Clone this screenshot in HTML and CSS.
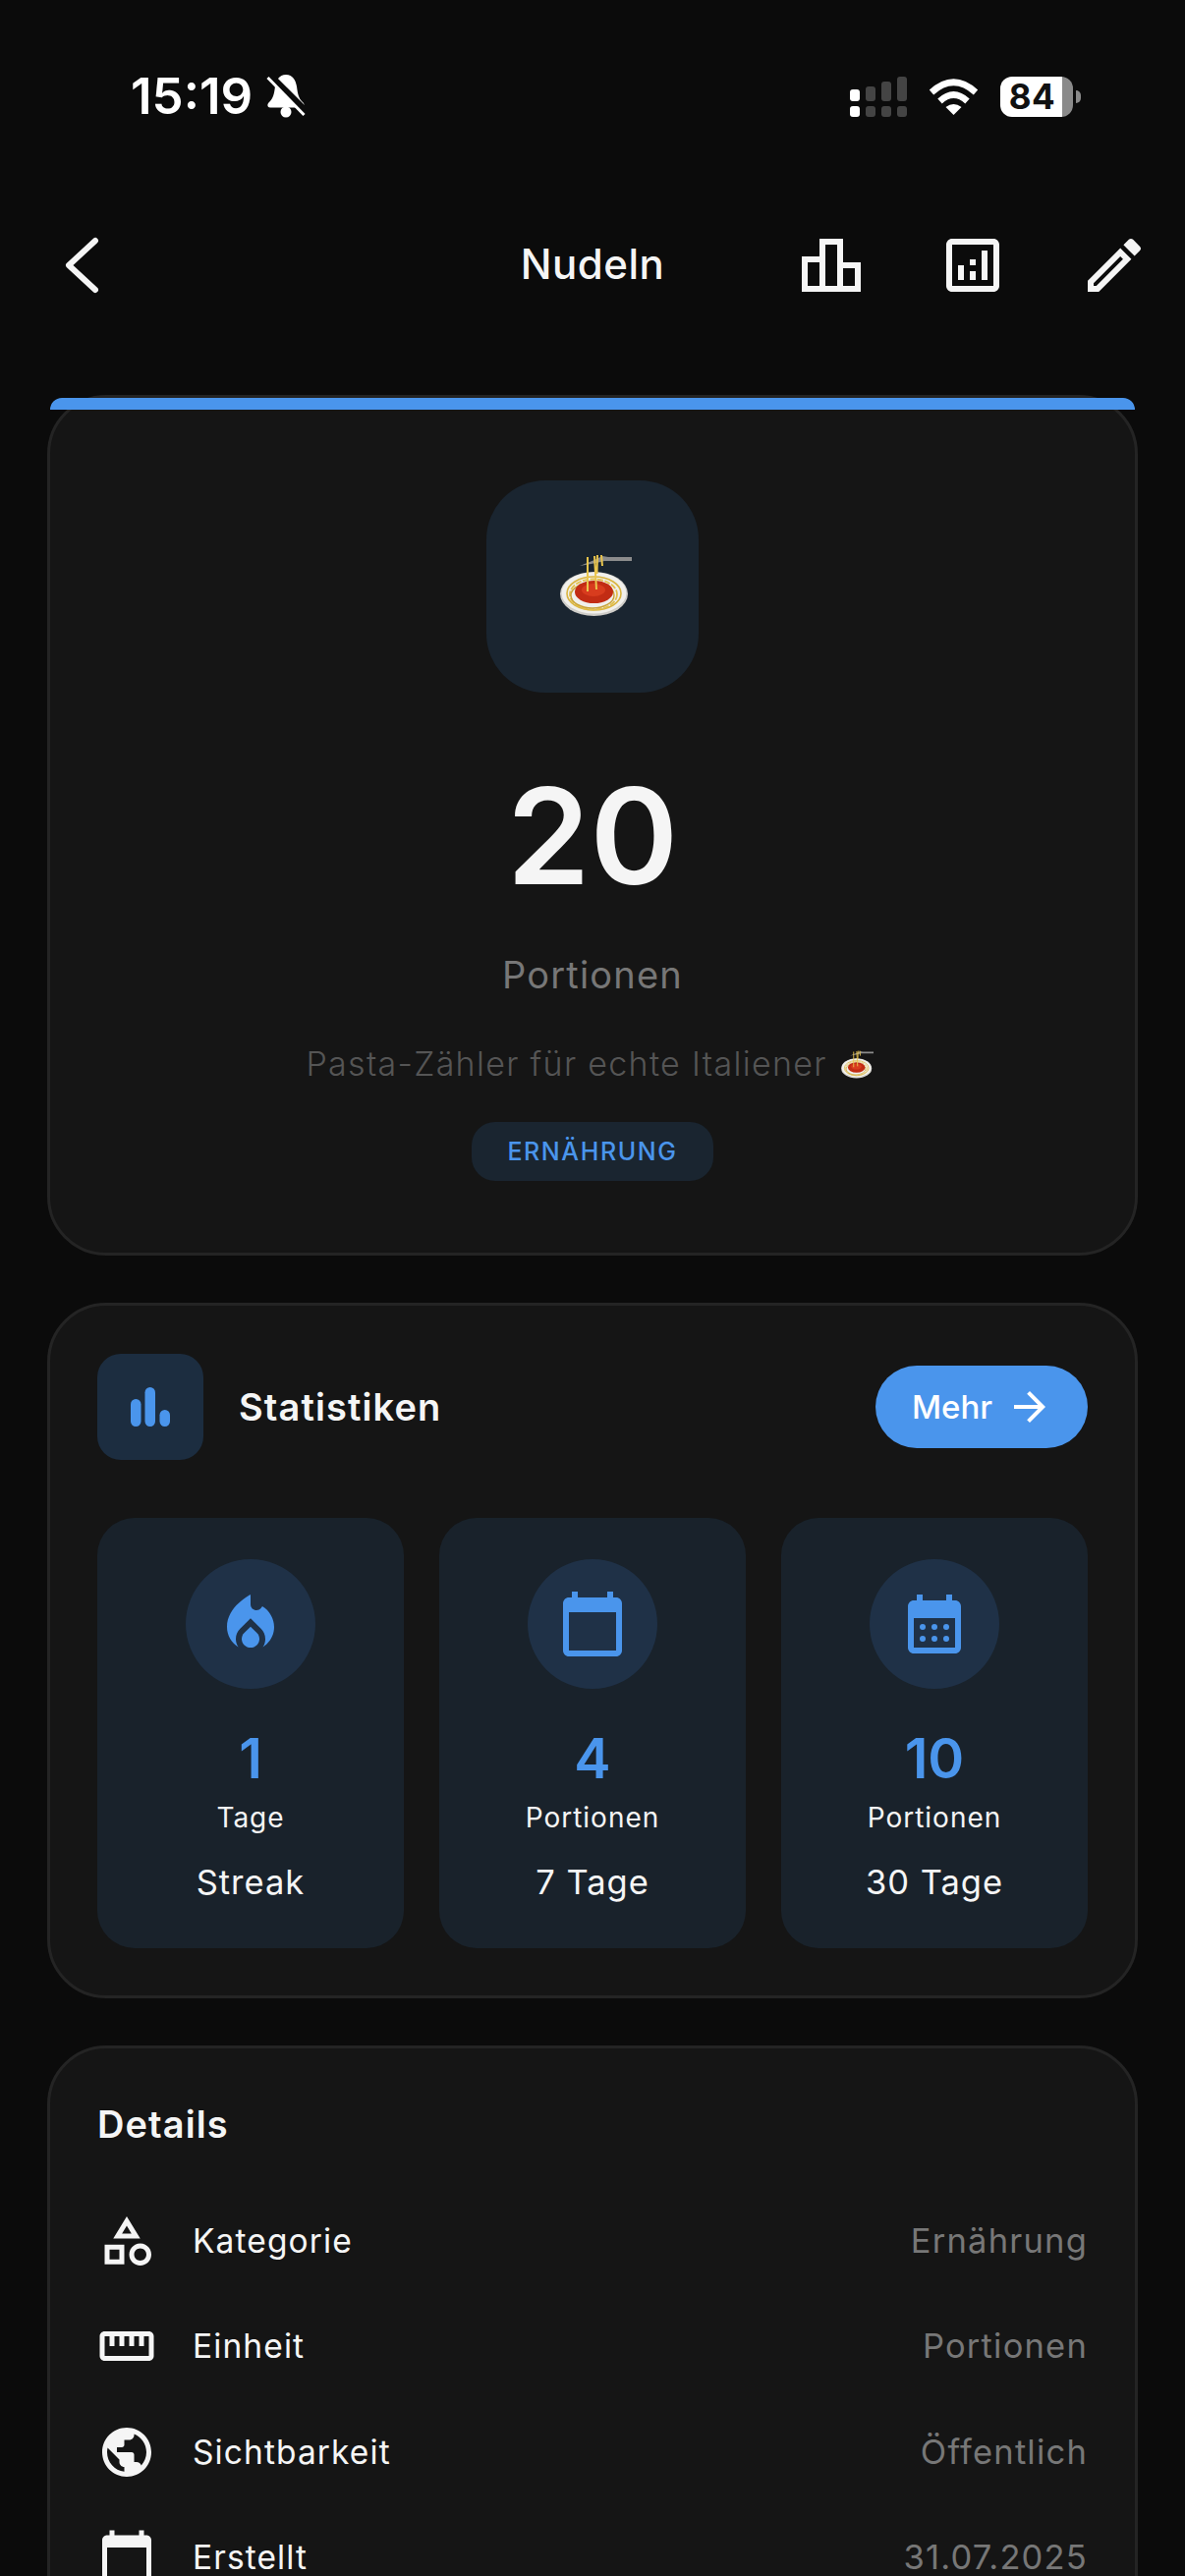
FILE: index.html
```html
<!DOCTYPE html>
<html lang="de">

<head>
    <meta charset="UTF-8">
    <meta name="viewport" content="width=device-width, initial-scale=1.0">
    <title>Nudeln</title>
    <link rel="stylesheet" href="styles.css">
</head>

<body>

    <!-- Spaghetti-Emoji, wird zweimal benutzt -->
    <svg class="sprite" hidden>
        <symbol id="pasta" viewBox="0 0 80 70">
            <path d="M80 5L56 5L50 4L42 8L27 14L44 11L52 9L80 9Z" fill="#8c8c8c" />
            <ellipse cx="41.500" cy="42.500" rx="34.500" ry="22.500" fill="#cfcdc8" />
            <ellipse cx="41.500" cy="41.500" rx="33" ry="21" fill="#f1f0ec" />
            <ellipse cx="41.500" cy="42" rx="27.500" ry="17" fill="none" stroke="#d9b440" stroke-width="1.600" />
            <ellipse cx="41" cy="43" rx="24" ry="15.500" fill="none" stroke="#e2c04e" stroke-width="1.800" stroke-dasharray="6 1.500" />
            <ellipse cx="40" cy="44" rx="22" ry="13" fill="none" stroke="#c9a238" stroke-width="1.400" />
            <ellipse cx="41.500" cy="40.500" rx="19.500" ry="11.500" fill="#c22c14" />
            <ellipse cx="41" cy="38.500" rx="12" ry="6.500" fill="#d83c1e" />
            <path d="M35 5L35 40M42 4L44 38M45 3L44.500 22M49 3L50 14" fill="none" stroke="#e9c54c" stroke-width="2" />
        </symbol>
    </svg>

    <!-- Statusleiste -->
    <div class="status-bar">
        <div class="status-left">
            <span class="time">15:19</span>
            <svg class="bell" viewBox="0 0 40 44">
                <path d="M20 0C27 0 30 6 31 12C32 20 33 24 37 28C39.500 30 39 33.500 36 33.500L4 33.500C1 33.500 .5 30 3 28C7 24 8 20 9 12C10 6 13 0 20 0Z" fill="#fff" />
                <circle cx="20" cy="38" r="5.500" fill="#fff" />
                <path d="M4 1L41 38" stroke="#0b0b0b" stroke-width="7" />
                <path d="M1.500 3L38.500 41" stroke="#fff" stroke-width="3" />
            </svg>
        </div>
        <div class="status-right">
            <svg class="signal" viewBox="0 0 58 41">
                <rect x="0" y="13" width="10" height="12" rx="3" fill="#fff" />
                <rect x="16" y="10" width="10" height="15" rx="3" fill="#444" />
                <rect x="32" y="5" width="10" height="20" rx="3" fill="#444" />
                <rect x="48" y="0" width="10" height="25" rx="3" fill="#444" />
                <rect x="0" y="30" width="10" height="11" rx="3" fill="#fff" />
                <rect x="16" y="30" width="10" height="11" rx="3" fill="#444" />
                <rect x="32" y="30" width="10" height="11" rx="3" fill="#444" />
                <rect x="48" y="30" width="10" height="11" rx="3" fill="#444" />
            </svg>
            <svg class="wifi" viewBox="0 0 51 37">
                <path d="M3 14Q25.500 -6.500 48 14" fill="none" stroke="#fff" stroke-width="6.500" />
                <path d="M11.500 23Q25.500 10 39.500 23" fill="none" stroke="#fff" stroke-width="6.500" />
                <path d="M25.500 37L17.500 29Q25.500 23 33.500 29Z" fill="#fff" />
            </svg>
            <div class="battery">84</div>
        </div>
    </div>

    <!-- Kopfzeile -->
    <header class="nav">
        <svg class="icon-big" viewBox="0 0 72 72">
            <polyline points="61,11 34,36 61,61" fill="none" stroke="#f5f5f5" stroke-width="6" stroke-linecap="round" stroke-linejoin="round" />
        </svg>
        <div class="nav-title">Nudeln</div>
        <div class="nav-actions">
            <svg class="icon-big" viewBox="0 0 24 24">
                <path d="M16 11V3H8v6H2v12h20V11h-6zm-6-6h4v14h-4V5zm-6 6h4v8H4v-8zm16 8h-4v-6h4v6z" />
            </svg>
            <svg class="icon-big" viewBox="0 0 24 24">
                <path d="M19 3H5c-1.100 0-2 .9-2 2v14c0 1.100.9 2 2 2h14c1.100 0 2-.9 2-2V5c0-1.100-.9-2-2-2zm0 16H5V5h14v14z" />
                <path d="M7 12h2v5H7zm8-5h2v10h-2zm-4 7h2v3h-2zm0-4h2v2h-2z" />
            </svg>
            <svg class="icon-big" viewBox="0 0 24 24">
                <path d="M3 17.250V21h3.750L17.810 9.940l-3.750-3.750L3 17.250zM5.920 19H5v-.92l9.060-9.060.92.92L5.920 19zM20.710 5.630l-2.340-2.340c-.2-.2-.45-.29-.71-.29s-.51.1-.7.29l-1.830 1.830 3.750 3.750 1.830-1.830c.39-.39.39-1.020 0-1.410z" />
            </svg>
        </div>
    </header>

    <main class="content">

        <!-- Zähler -->
        <section class="card counter-card">
            <div class="counter-strip"></div>
            <div class="counter-emoji">
                <svg class="pasta-big"><use href="#pasta" /></svg>
            </div>
            <div class="counter-value">20</div>
            <div class="counter-unit">Portionen</div>
            <div class="counter-desc">Pasta-Zähler für echte Italiener <svg class="pasta-small"><use href="#pasta" /></svg></div>
            <div class="counter-tag">ERNÄHRUNG</div>
        </section>

        <!-- Statistiken -->
        <section class="card stats-card">
            <div class="stats-head">
                <div class="stats-icon">
                    <svg class="icon-40" viewBox="0 0 40 40">
                        <rect x="0" y="12" width="10.500" height="28" rx="5.200" />
                        <rect x="14.500" y="0" width="10.500" height="40" rx="5.200" />
                        <rect x="29.500" y="23" width="10.500" height="17" rx="5.200" />
                    </svg>
                </div>
                <h2 class="card-title">Statistiken</h2>
                <button class="more-button">
                    <span>Mehr</span>
                    <svg class="icon-48" viewBox="0 0 24 24">
                        <path d="M12 4l-1.410 1.410L16.170 11H4v2h12.170l-5.580 5.590L12 20l8-8z" />
                    </svg>
                </button>
            </div>

            <div class="stats-grid">
                <div class="stat-tile">
                    <div class="stat-circle">
                        <svg class="icon-big" viewBox="0 0 24 24">
                            <path d="M12 12.900l-2.130 2.090C9.310 15.550 9 16.280 9 17.060 9 18.680 10.350 20 12 20s3-1.320 3-2.940c0-.78-.31-1.520-.87-2.070L12 12.900z" />
                            <path d="M16 6l-.44.55C14.380 8.020 12 7.190 12 5.300V2S4 6 4 13c0 2.920 1.560 5.470 3.890 6.860-.56-.79-.89-1.760-.89-2.800 0-1.320.52-2.560 1.470-3.500L12 10.100l3.530 3.470c.95.93 1.470 2.170 1.470 3.500 0 1.020-.31 1.960-.85 2.750 1.890-1.150 3.290-3.060 3.710-5.300.66-3.460-1.080-6.860-3.860-8.520z" />
                        </svg>
                    </div>
                    <div class="stat-number">1</div>
                    <div class="stat-unit">Tage</div>
                    <div class="stat-label">Streak</div>
                </div>
                <div class="stat-tile">
                    <div class="stat-circle">
                        <svg class="icon-big" viewBox="0 0 24 24">
                            <path d="M20 3h-1V1h-2v2H7V1H5v2H4c-1.100 0-2 .9-2 2v16c0 1.100.9 2 2 2h16c1.100 0 2-.9 2-2V5c0-1.100-.9-2-2-2zm0 18H4V8h16v13z" />
                        </svg>
                    </div>
                    <div class="stat-number">4</div>
                    <div class="stat-unit">Portionen</div>
                    <div class="stat-label">7 Tage</div>
                </div>
                <div class="stat-tile">
                    <div class="stat-circle">
                        <svg class="icon-big" viewBox="0 0 24 24">
                            <path d="M19 4h-1V2h-2v2H8V2H6v2H5c-1.110 0-1.990.9-1.990 2L3 20c0 1.100.89 2 2 2h14c1.100 0 2-.9 2-2V6c0-1.100-.9-2-2-2zm0 16H5V10h14v10z" />
                            <circle cx="8" cy="13" r="1" />
                            <circle cx="12" cy="13" r="1" />
                            <circle cx="16" cy="13" r="1" />
                            <circle cx="8" cy="17" r="1" />
                            <circle cx="12" cy="17" r="1" />
                            <circle cx="16" cy="17" r="1" />
                        </svg>
                    </div>
                    <div class="stat-number">10</div>
                    <div class="stat-unit">Portionen</div>
                    <div class="stat-label">30 Tage</div>
                </div>
            </div>
        </section>

        <!-- Details -->
        <section class="card details-card">
            <h2 class="card-title">Details</h2>
            <div class="details-list">
                <div class="detail-row">
                    <svg class="icon-60" viewBox="0 0 24 24">
                        <path d="M12 2l-5.500 9h11L12 2zm0 3.840L13.930 9h-3.870L12 5.840zM17.500 13c-2.490 0-4.500 2.010-4.500 4.500s2.010 4.500 4.500 4.500 4.500-2.010 4.500-4.500-2.010-4.500-4.500-4.500zm0 7c-1.380 0-2.500-1.120-2.500-2.500s1.120-2.500 2.500-2.500 2.500 1.120 2.500 2.500-1.120 2.500-2.500 2.500zM3 21.500h8v-8H3v8zm2-6h4v4H5v-4z" />
                    </svg>
                    <span class="detail-name">Kategorie</span>
                    <span class="detail-value">Ernährung</span>
                </div>
                <div class="detail-row">
                    <svg class="icon-60" viewBox="0 0 24 24">
                        <path d="M21 6H3c-1.100 0-2 .9-2 2v8c0 1.100.9 2 2 2h18c1.100 0 2-.9 2-2V8c0-1.100-.9-2-2-2zm0 10H3V8h2v4h2V8h2v4h2V8h2v4h2V8h2v4h2V8h2v8z" />
                    </svg>
                    <span class="detail-name">Einheit</span>
                    <span class="detail-value">Portionen</span>
                </div>
                <div class="detail-row">
                    <svg class="icon-60" viewBox="0 0 24 24">
                        <path d="M12 2C6.480 2 2 6.480 2 12s4.480 10 10 10 10-4.480 10-10S17.520 2 12 2zm-1 17.930c-3.950-.49-7-3.850-7-7.930 0-.62.08-1.210.21-1.790L9 15v1c0 1.100.9 2 2 2v1.930zm6.900-2.540c-.26-.81-1-1.390-1.900-1.390h-1v-3c0-.55-.45-1-1-1H8v-2h2c.55 0 1-.45 1-1V7h2c1.100 0 2-.9 2-2v-.41c2.930 1.190 5 4.060 5 7.410 0 2.080-.8 3.970-2.100 5.390z" />
                    </svg>
                    <span class="detail-name">Sichtbarkeit</span>
                    <span class="detail-value">Öffentlich</span>
                </div>
                <div class="detail-row">
                    <svg class="icon-60" viewBox="0 0 24 24">
                        <path d="M20 3h-1V1h-2v2H7V1H5v2H4c-1.100 0-2 .9-2 2v16c0 1.100.9 2 2 2h16c1.100 0 2-.9 2-2V5c0-1.100-.9-2-2-2zm0 18H4V8h16v13z" />
                    </svg>
                    <span class="detail-name">Erstellt</span>
                    <span class="detail-value">31.07.2025</span>
                </div>
            </div>
        </section>

    </main>

</body>

</html>
```

FILE: styles.css
```css
* {
    box-sizing: border-box;
}

body {
    width: 1206px;
    height: 2622px;
    margin: 0;
    overflow: hidden;
    font-family: Inter, "Liberation Sans", sans-serif;
    color: #f5f5f5;
    background-color: #0b0b0b;
}

svg {
    display: block;
    flex-shrink: 0;
    fill: currentColor;
}

.sprite {
    display: none;
}

/* Statusleiste */
.status-bar {
    display: flex;
    justify-content: space-between;
    align-items: center;
    height: 196px;
    padding: 0 114px 0 133px;
}

.status-left {
    display: flex;
    align-items: center;
    gap: 14px;
}

.time {
    font-size: 51px;
    font-weight: 600;
    line-height: 60px;
    color: #fff;
}

.bell {
    width: 40px;
    height: 44px;
}

.status-right {
    display: flex;
    align-items: center;
}

.signal {
    width: 58px;
    height: 41px;
}

.wifi {
    width: 51px;
    height: 37px;
    margin: 0 22px;
}

.battery {
    position: relative;
    width: 74px;
    height: 41px;
    padding-right: 9px;
    border-radius: 12px;
    font-size: 35px;
    font-weight: 700;
    line-height: 41px;
    letter-spacing: 0.5px;
    text-align: center;
    color: #111;
    background: linear-gradient(to right, #fff 85%, #8a8a8a 85%);
}

/* kleine Nase am Akku */
.battery::after {
    content: "";
    position: absolute;
    top: 14px;
    right: -8px;
    width: 5px;
    height: 13px;
    border-radius: 0 6px 6px 0;
    background-color: #8a8a8a;
}

/* Kopfzeile */
.nav {
    display: grid;
    grid-template-columns: 1fr auto 1fr;
    align-items: center;
    height: 148px;
    padding: 0 36px;
}

.nav-title {
    margin-top: -3px;
    font-size: 42px;
    font-weight: 500;
    letter-spacing: 0.5px;
    text-align: center;
}

.nav-actions {
    display: flex;
    justify-content: flex-end;
    gap: 72px;
}

.icon-big {
    width: 72px;
    height: 72px;
}

.icon-60 {
    width: 60px;
    height: 60px;
}

.icon-48 {
    width: 48px;
    height: 48px;
}

.icon-40 {
    width: 40px;
    height: 40px;
}

/* Karten */
.content {
    display: flex;
    flex-direction: column;
    gap: 48px;
    padding: 58px 48px 0;
}

.card {
    position: relative;
    flex-shrink: 0;
    padding: 47px 48px;
    border: 3px solid #242424;
    border-radius: 60px;
    background-color: #151515;
}

.card-title {
    margin: 0;
    font-size: 38px;
    font-weight: 600;
    line-height: 58px;
    letter-spacing: 1.1px;
}

/* Zähler */
.counter-card {
    display: flex;
    flex-direction: column;
    align-items: center;
    height: 876px;
    padding-top: 84px;
}

.counter-strip {
    position: absolute;
    top: 0;
    left: 0;
    right: 0;
    height: 12px;
    border-radius: 12px 12px 0 0;
    background-color: #4a95ec;
}

.counter-emoji {
    display: flex;
    justify-content: center;
    align-items: center;
    width: 216px;
    height: 216px;
    border-radius: 60px;
    background-color: #1a2530;
}

.pasta-big {
    width: 80px;
    height: 70px;
}

.pasta-small {
    display: inline-block;
    width: 36px;
    height: 32px;
    vertical-align: -5px;
}

.counter-value {
    margin-top: 51px;
    font-size: 136px;
    font-weight: 600;
    line-height: 190px;
}

.counter-unit {
    margin-top: 24px;
    font-size: 38px;
    line-height: 44px;
    letter-spacing: 1.2px;
    color: #777;
}

.counter-desc {
    margin-top: 47px;
    padding-right: 6px;
    font-size: 34px;
    font-weight: 300;
    line-height: 44px;
    letter-spacing: 1.3px;
    color: #555;
}

.counter-tag {
    margin-top: 37px;
    width: 246px;
    height: 60px;
    border-radius: 24px;
    font-size: 25px;
    font-weight: 500;
    line-height: 60px;
    letter-spacing: 1.6px;
    text-align: center;
    color: #4a95ec;
    background-color: #1a2530;
}

/* Statistiken */
.stats-card {
    padding-top: 49px;
    padding-bottom: 48px;
}

.stats-head {
    display: flex;
    align-items: center;
    gap: 36px;
    margin-bottom: 59px;
}

.stats-icon {
    display: flex;
    justify-content: center;
    align-items: center;
    width: 108px;
    height: 108px;
    border-radius: 24px;
    color: #4a95ec;
    background-color: #1c2d40;
}

.more-button {
    display: flex;
    align-items: center;
    gap: 14px;
    height: 84px;
    margin-left: auto;
    padding: 0 35px 0 37px;
    border: none;
    border-radius: 42px;
    font-family: inherit;
    font-size: 33px;
    font-weight: 500;
    color: #fff;
    background-color: #4a95ec;
}

.stats-grid {
    display: grid;
    grid-template-columns: repeat(3, 1fr);
    gap: 36px;
}

.stat-tile {
    display: flex;
    flex-direction: column;
    align-items: center;
    height: 438px;
    padding-top: 42px;
    border-radius: 38px;
    background-color: #19222b;
}

.stat-circle {
    display: flex;
    justify-content: center;
    align-items: center;
    width: 132px;
    height: 132px;
    border-radius: 50%;
    color: #4a95ec;
    background-color: #1f3147;
}

.stat-number {
    margin-top: 41px;
    font-size: 56px;
    font-weight: 600;
    line-height: 60px;
    color: #4a95ec;
}

.stat-unit {
    margin-top: 12px;
    font-size: 28px;
    line-height: 36px;
    letter-spacing: 1px;
}

.stat-label {
    margin-top: 25px;
    font-size: 34.500px;
    line-height: 46px;
    letter-spacing: 1px;
}

/* Details */
.details-card {
    height: 700px;
    padding-top: 48px;
}

.details-list {
    margin-top: 36px;
}

.detail-row {
    display: flex;
    align-items: center;
    height: 107.500px;
    gap: 37px;
}

.detail-name {
    font-size: 33.500px;
    line-height: 44px;
    letter-spacing: 1.1px;
}

.detail-value {
    margin-left: auto;
    font-size: 34.500px;
    line-height: 44px;
    letter-spacing: 1.2px;
    color: #777;
}
```
